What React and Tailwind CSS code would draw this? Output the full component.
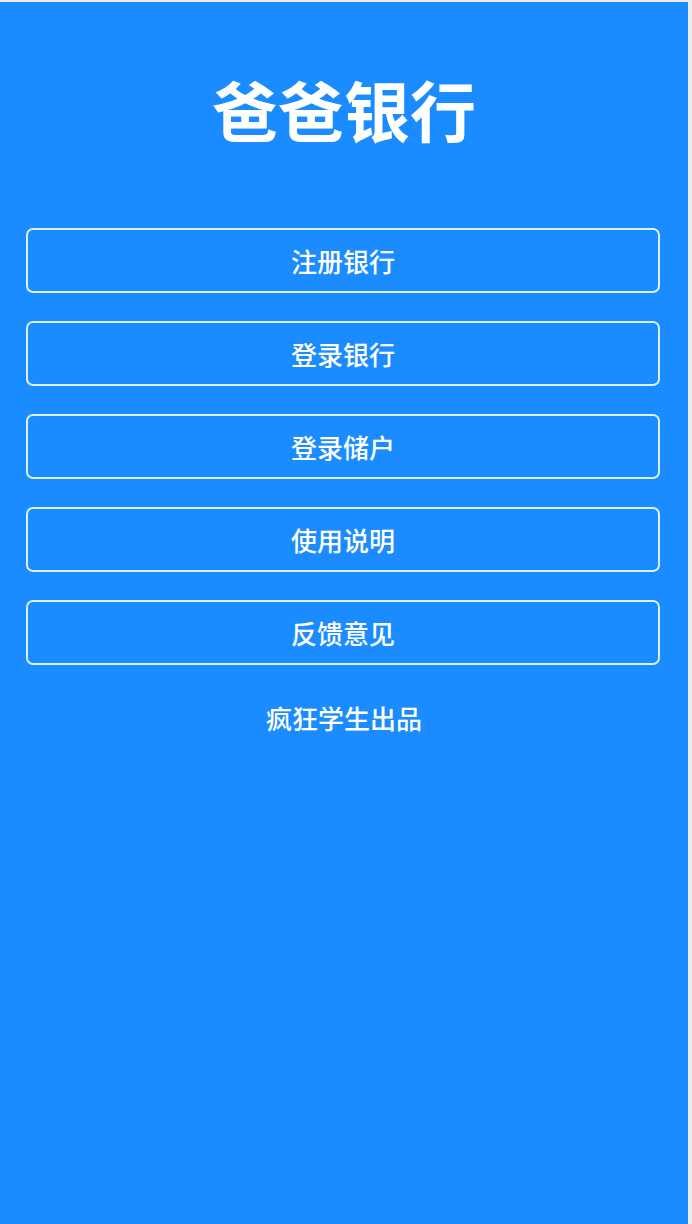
export default function App() {
  const items = ["注册银行", "登录银行", "登录储户", "使用说明", "反馈意见"];
  return (
    <div
      className="w-[692px] h-[1224px] bg-[#ececec] pt-[2px] pr-[4px]"
      style={{ fontFamily: '"Noto Sans CJK SC", "Noto Sans", sans-serif' }}
    >
      <div className="h-full bg-[#1a8cff] flex flex-col text-white">
        <div className="mt-[73px] h-[66px] text-[66px] leading-[66px] font-bold text-center">
          爸爸银行
        </div>
        <div className="mt-[87px] ml-[26px] mr-[28px] flex flex-col gap-[28px]">
          {items.map((t) => (
            <div
              key={t}
              className="h-[65px] border-2 border-white/85 rounded-[7px] flex items-center justify-center text-[26px] font-medium leading-none"
            >
              {t}
            </div>
          ))}
        </div>
        <div className="mt-[40px] text-center text-[26px] leading-[26px] font-medium">
          疯狂学生出品
        </div>
      </div>
    </div>
  );
}
